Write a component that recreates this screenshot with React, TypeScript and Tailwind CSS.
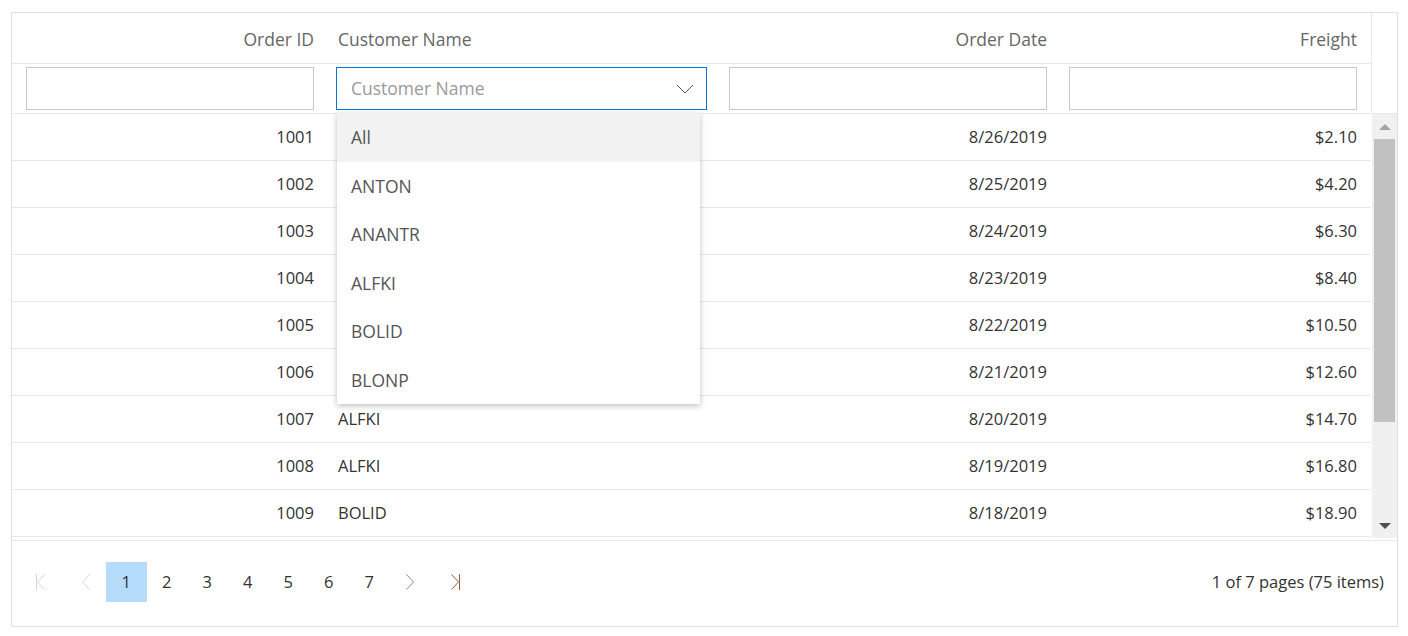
import { useState } from "react";

type Order = { id: number; customer: string; date: string; freight: string };

const orders: Order[] = [
  { id: 1001, customer: "ANTON", date: "8/26/2019", freight: "$2.10" },
  { id: 1002, customer: "ANANTR", date: "8/25/2019", freight: "$4.20" },
  { id: 1003, customer: "ANTON", date: "8/24/2019", freight: "$6.30" },
  { id: 1004, customer: "BLONP", date: "8/23/2019", freight: "$8.40" },
  { id: 1005, customer: "BOLID", date: "8/22/2019", freight: "$10.50" },
  { id: 1006, customer: "ANANTR", date: "8/21/2019", freight: "$12.60" },
  { id: 1007, customer: "ALFKI", date: "8/20/2019", freight: "$14.70" },
  { id: 1008, customer: "ALFKI", date: "8/19/2019", freight: "$16.80" },
  { id: 1009, customer: "BOLID", date: "8/18/2019", freight: "$18.90" },
];

const options = ["All", "ANTON", "ANANTR", "ALFKI", "BOLID", "BLONP"];

const font = { fontFamily: '"Open Sans", "Noto Sans", sans-serif' };

function Chevron({ dir, color, bar }: { dir: "left" | "right"; color: string; bar?: boolean }) {
  return (
    <svg width="14" height="16" viewBox="0 0 14 16" fill="none">
      {dir === "right" ? (
        <>
          <path d="M3.5 0.5 L10.5 8 L3.5 15.5" stroke={color} strokeWidth="1" />
          {bar && <line x1="11.5" y1="0" x2="11.5" y2="16" stroke={color} strokeWidth="1" />}
        </>
      ) : (
        <>
          <path d="M10.5 0.5 L3.5 8 L10.5 15.5" stroke={color} strokeWidth="1" />
          {bar && <line x1="2.5" y1="0" x2="2.5" y2="16" stroke={color} strokeWidth="1" />}
        </>
      )}
    </svg>
  );
}

export default function App() {
  const [page, setPage] = useState(1);
  const [open] = useState(true);
  const [hover] = useState("All");

  return (
    <div className="bg-white w-[1408px] h-[636px] pl-[11px] pt-[12px]" style={font}>
      <div className="w-[1387px] h-[615px] border border-[#e0e0e0] flex flex-col">
        {/* Header + filter */}
        <div className="flex border-b border-[#e8e8e8]">
          <div className="w-[1359px]">
            <div className="flex h-[51px] items-center pt-[2px] border-b border-[#e8e8e8] text-[17.5px] text-[#666]">
              <div className="w-[314px] pr-[12px] text-right">Order ID</div>
              <div className="w-[393px] pl-[12px]">Customer Name</div>
              <div className="w-[340px] pr-[12px] text-right">Order Date</div>
              <div className="w-[312px] pr-[14px] text-right">Freight</div>
            </div>
            <div className="flex h-[49px] items-center">
              <div className="w-[314px] pl-[14px] pr-[12px]">
                <div className="h-[43px] border border-[#c8c8c8]" />
              </div>
              <div className="w-[393px] pl-[10px] pr-[12px] relative">
                <div className="h-[43px] border border-[#0078d7] flex items-center justify-between pl-[14px] pr-[12px]">
                  <span className="text-[17.5px] text-[#9a9a9a]">Customer Name</span>
                  <svg width="18" height="10" viewBox="0 0 18 10" fill="none">
                    <path d="M1 1 L9 9 L17 1" stroke="#5a4a7a" strokeWidth="1" />
                  </svg>
                </div>
                {open && (
                  <div className="absolute left-[11px] top-[46px] w-[363px] bg-white shadow-[0_2px_6px_rgba(0,0,0,0.25)] z-10 text-[17.5px] text-[#555]">
                    {options.map((o) => (
                      <div
                        key={o}
                        className={`h-[48.5px] flex items-center pl-[14px] ${hover === o ? "bg-[#f2f2f2]" : ""}`}
                      >
                        {o}
                      </div>
                    ))}
                  </div>
                )}
              </div>
              <div className="w-[340px] pl-[10px] pr-[12px]">
                <div className="h-[43px] border border-[#c8c8c8]" />
              </div>
              <div className="w-[312px] pl-[10px] pr-[14px]">
                <div className="h-[43px] border border-[#c8c8c8]" />
              </div>
            </div>
          </div>
          <div className="w-[26px] border-l border-[#e8e8e8]" />
        </div>

        {/* Body */}
        <div className="flex h-[424px]">
          <div className="w-[1359px]">
            {orders.map((o, i) => (
              <div key={o.id} className="flex h-[47px] items-center border-b border-[#e8e8e8] text-[16.5px] text-[#333]">
                <div className="w-[314px] pr-[12px] text-right">{o.id}</div>
                {/* rows under the open popup are hidden by it */}
                <div className="w-[393px] pl-[12px]">{open && i < 6 ? "" : o.customer}</div>
                <div className="w-[340px] pr-[12px] text-right">{o.date}</div>
                <div className="w-[312px] pr-[14px] text-right">{o.freight}</div>
              </div>
            ))}
          </div>
          <div className="w-[25px] ml-[1px] bg-[#f0f0f0] flex flex-col items-center">
            <div className="h-[25px] flex items-center justify-center">
              <svg width="12" height="6" viewBox="0 0 12 6">
                <path d="M0 6 L6 0 L12 6 Z" fill="#a3a3a3" />
              </svg>
            </div>
            <div className="w-[21px] h-[283px] bg-[#c1c1c1]" />
            <div className="flex-1" />
            <div className="h-[25px] flex items-center justify-center">
              <svg width="12" height="6" viewBox="0 0 12 6">
                <path d="M0 0 L6 6 L12 0 Z" fill="#505050" />
              </svg>
            </div>
          </div>
        </div>

        {/* Pager */}
        <div className="mt-[2px] border-t border-[#e8e8e8] flex-1 flex items-center justify-between pl-[8px] pr-[13px] pb-[3px]">
          <div className="flex items-center text-[16.5px] text-[#333]">
            <div className="w-[41px] h-[40px] flex items-center justify-center">
              <Chevron dir="left" color="#d6d6d6" bar />
            </div>
            <div className="w-[41px] h-[40px] ml-[4px] flex items-center justify-center">
              <Chevron dir="left" color="#d6d6d6" />
            </div>
            {[1, 2, 3, 4, 5, 6, 7].map((p) => (
              <button
                key={p}
                onClick={() => setPage(p)}
                className={`w-[40.5px] h-[40px] flex items-center justify-center ${page === p ? "bg-[#b5dcfb]" : ""}`}
              >
                {p}
              </button>
            ))}
            <div className="w-[41px] h-[40px] flex items-center justify-center">
              <Chevron dir="right" color="#8a8a8a" />
            </div>
            <div className="w-[41px] h-[40px] ml-[4px] flex items-center justify-center">
              <Chevron dir="right" color="#9a5a3a" bar />
            </div>
          </div>
          <div className="text-[16.5px] text-[#333]">1 of 7 pages (75 items)</div>
        </div>
      </div>
    </div>
  );
}
